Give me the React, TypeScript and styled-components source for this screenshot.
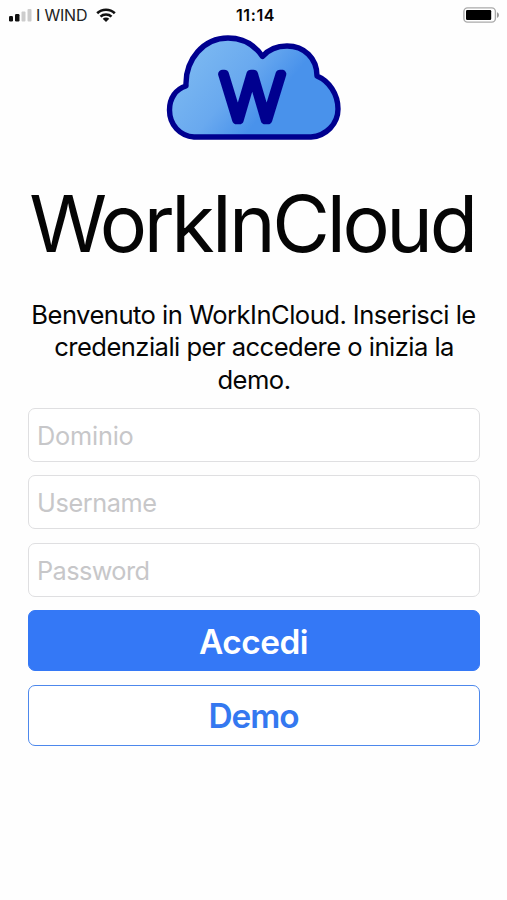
import React from "react";
import styled, { createGlobalStyle } from "styled-components";

const GlobalStyle = createGlobalStyle`
  * { box-sizing: border-box; }
  body {
    margin: 0;
    background: #fff;
    color: #050505;
    font-family: Inter, "Liberation Sans", sans-serif;
  }
`;

const Screen = styled.main`
  width: 507px;
  height: 900px;
  overflow: hidden;
  background: #fefefe;
`;

const StatusBar = styled.header`
  display: grid;
  grid-template-columns: 1fr auto 1fr;
  align-items: center;
  height: 29px;
  padding: 0 7px 0 8px;
`;

const Carrier = styled.div`
  display: flex;
  align-items: center;
  font-size: 16px;
  line-height: 29px;
  letter-spacing: -0.2px;
  color: #222;
`;

const CarrierName = styled.span`
  padding-top: 1px;
`;

const SignalIcon = styled.svg`
  display: block;
  margin-right: 4px;
`;

const WifiIcon = styled.svg`
  display: block;
  margin-left: 9px;
`;

const Clock = styled.time`
  padding: 1px 0 0 3px;
  font-size: 16px;
  font-weight: 600;
  line-height: 29px;
  letter-spacing: 0.6px;
`;

const BatteryIcon = styled.svg`
  display: block;
  justify-self: end;
`;

const Content = styled.section`
  display: flex;
  flex-direction: column;
  padding: 0 27px 0 28px;
`;

const Logo = styled.svg`
  display: block;
  align-self: center;
  margin: 5px 2px 0 0;
`;

const Title = styled.h1`
  margin: 31px -20px 0;
  font-size: 79px;
  font-weight: 400;
  line-height: 100px;
  letter-spacing: -3.4px;
  text-align: center;
  text-indent: -4px;
  white-space: nowrap;
`;

const Intro = styled.p`
  height: 97px;
  margin: 26px -10px 0;
  font-size: 25.6px;
  line-height: 32.3px;
  letter-spacing: -0.54px;
  text-align: center;
  text-indent: -1px;
`;

const Form = styled.form`
  display: flex;
  flex-direction: column;
  gap: 13.4px;
  margin-top: 12px;
`;

const Field = styled.input<{ $tracking: number }>`
  width: 100%;
  height: 54px;
  padding: 1px 8px 0;
  border: 1.5px solid #dfdfe1;
  border-radius: 7px;
  background: #fff;
  font-family: inherit;
  font-size: 25.3px;
  letter-spacing: ${(p) => p.$tracking}px;
  outline: none;

  &::placeholder {
    color: #c7c7c9;
    opacity: 1;
  }
`;

const Button = styled.button<{ $filled?: boolean }>`
  height: 61px;
  padding: 2px 1px 0 0;
  border: 1.5px solid ${(p) => (p.$filled ? "#3478f6" : "#4d88ec")};
  border-radius: 7px;
  background: ${(p) => (p.$filled ? "#3478f6" : "#fff")};
  color: ${(p) => (p.$filled ? "#fff" : "#3478f0")};
  font-family: inherit;
  font-size: 33.4px;
  font-weight: 600;
  letter-spacing: ${(p) => (p.$filled ? "-0.5px" : "-1.1px")};
`;

const fields = [
  { name: "Dominio", type: "text", tracking: -0.2 },
  { name: "Username", type: "text", tracking: -0.4 },
  { name: "Password", type: "password", tracking: -0.6 },
];

export default function App() {
  return (
    <Screen>
      <GlobalStyle />
      <StatusBar>
        <Carrier>
          <SignalIcon width="24" height="14" viewBox="0 0 24 14">
            <rect x="1" y="8" width="4" height="5.5" rx="1.2" fill="#111" />
            <rect x="7" y="6" width="4.5" height="7.5" rx="1.2" fill="#111" />
            <rect x="13.5" y="3.5" width="4" height="10" rx="1" fill="#ccc" />
            <rect x="19.5" y="1" width="4" height="12.5" rx="1" fill="#ccc" />
          </SignalIcon>
          <CarrierName>I WIND</CarrierName>
          <WifiIcon width="20" height="15" viewBox="0 0 20 15" fill="none" stroke="#111" strokeWidth="2.6">
            <path d="M1.2 5.2C6 .5 14 .5 18.8 5.2" />
            <path d="M4.5 8.6C7.4 5.8 12.6 5.8 15.5 8.6" />
            <path d="M10 14L6.7 10.8C8.5 9.1 11.5 9.1 13.3 10.8Z" fill="#111" stroke="none" />
          </WifiIcon>
        </Carrier>
        <Clock>11:14</Clock>
        <BatteryIcon width="37" height="16" viewBox="0 0 37 16">
          <rect x="0.9" y="0.9" width="31.5" height="14.2" rx="3.6" fill="#fff" stroke="#aaa" strokeWidth="1.4" />
          <rect x="3" y="3" width="25.2" height="10" rx="1.2" fill="#000" />
          <path d="M34 5.2C36.6 5.8 36.6 10.2 34 10.8Z" fill="#999" />
        </BatteryIcon>
      </StatusBar>
      <Content>
        <Logo width="176" height="108" viewBox="165 34 176 108">
          <defs>
            <linearGradient id="sky" gradientUnits="userSpaceOnUse" x1="190" y1="55" x2="275" y2="125">
              <stop offset="0" stopColor="#7bb8f1" />
              <stop offset="0.5" stopColor="#69a9ef" />
              <stop offset="0.85" stopColor="#4992eb" />
              <stop offset="1" stopColor="#4992eb" />
            </linearGradient>
          </defs>
          <path
            d="M194 137H311C326 136 338 124 338 109C338 94 329 81 317 76C317 58 304 46 287 46C277 46 268 50 262.5 56.5C254 44 242 38 228 38C204 38 185 59 186 86C176 89 169.5 98 169.5 110C169.5 125 180 136 194 137Z"
            fill="url(#sky)"
            stroke="#00008f"
            strokeWidth="5.4"
            strokeLinejoin="round"
          />
          <text
            x="220.5"
            y="119.8"
            textLength="63.5"
            lengthAdjust="spacingAndGlyphs"
            fontFamily="Inter, sans-serif"
            fontSize="63.5"
            fontWeight="100"
            fill="#00008f"
            stroke="#00008f"
            strokeWidth="8.6"
            strokeLinejoin="round"
          >
            W
          </text>
        </Logo>
        <Title>WorkInCloud</Title>
        <Intro>
          Benvenuto in WorkInCloud. Inserisci le
          <br />
          credenziali per accedere o inizia la
          <br />
          demo.
        </Intro>
        <Form>
          {fields.map((f) => (
            <Field key={f.name} type={f.type} placeholder={f.name} aria-label={f.name} $tracking={f.tracking} />
          ))}
          <Button type="button" $filled>
            Accedi
          </Button>
          <Button type="button">Demo</Button>
        </Form>
      </Content>
    </Screen>
  );
}
